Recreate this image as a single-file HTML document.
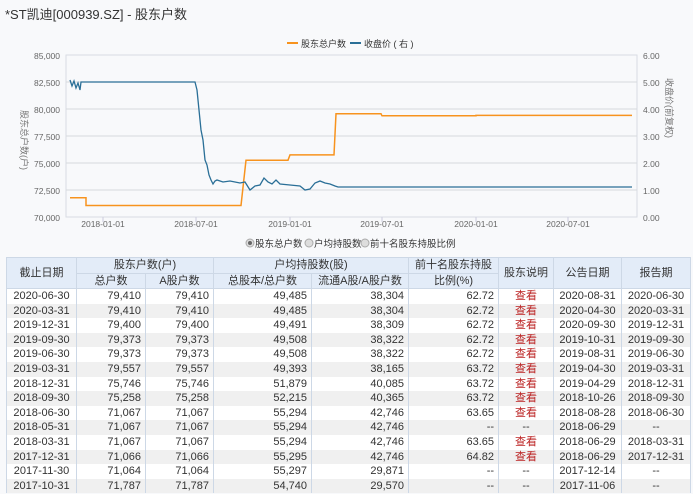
<!DOCTYPE html>
<html><head><meta charset="utf-8"><style>
body{margin:0;width:693px;height:494px;overflow:hidden;background:#f8f9fb;font-family:"Liberation Sans","Noto Sans CJK SC",sans-serif;position:relative}
.title{position:absolute;left:5px;top:4px;font-size:13px;color:#333}
svg{position:absolute;left:0;top:0}
table{position:absolute;left:6px;top:257px;width:684px;border-collapse:collapse;table-layout:fixed;font-size:11px;color:#333}
td,th{border:1px solid #cdd8e6;padding:0 4px;white-space:nowrap;overflow:hidden}
th{background:#e3ecf8;font-weight:normal;height:14.5px;line-height:14.5px;text-align:center}
td{height:14.6px;line-height:14.6px;text-align:right;border-top:none;border-bottom:none}
tbody tr:nth-child(even) td{background:#f0f0f0}
tbody tr:nth-child(odd) td{background:#fff}
td.c{text-align:center}
.r{color:#b22;}
</style></head><body>
<div class="title">*ST凯迪[000939.SZ] - 股东户数</div>
<svg width="693" height="255" font-family="Liberation Sans,Noto Sans CJK SC,sans-serif">
<rect x="66" y="55" width="571" height="162" fill="#f8f9fb" stroke="#d8dce3"/>
<g stroke="#d6d9de" stroke-width="1">
<line x1="66" x2="637" y1="82" y2="82"/><line x1="66" x2="637" y1="109" y2="109"/><line x1="66" x2="637" y1="136" y2="136"/><line x1="66" x2="637" y1="163" y2="163"/><line x1="66" x2="637" y1="190" y2="190"/>
</g>
<g stroke="#ccd" ><line x1="103" x2="103" y1="217" y2="222"/><line x1="196" x2="196" y1="217" y2="222"/><line x1="290" x2="290" y1="217" y2="222"/><line x1="382" x2="382" y1="217" y2="222"/><line x1="476" x2="476" y1="217" y2="222"/><line x1="568" x2="568" y1="217" y2="222"/></g>
<g font-size="8.5" fill="#666" text-anchor="end">
<text x="60" y="59">85,000</text><text x="60" y="86">82,500</text><text x="60" y="113">80,000</text><text x="60" y="140">77,500</text><text x="60" y="167">75,000</text><text x="60" y="194">72,500</text><text x="60" y="221">70,000</text>
</g>
<g font-size="8.5" fill="#666">
<text x="643" y="59">6.00</text><text x="643" y="86">5.00</text><text x="643" y="113">4.00</text><text x="643" y="140">3.00</text><text x="643" y="167">2.00</text><text x="643" y="194">1.00</text><text x="643" y="221">0.00</text>
</g>
<g font-size="8.5" fill="#666" text-anchor="middle">
<text x="103" y="227">2018-01-01</text><text x="196" y="227">2018-07-01</text><text x="290" y="227">2019-01-01</text><text x="382" y="227">2019-07-01</text><text x="476" y="227">2020-01-01</text><text x="568" y="227">2020-07-01</text>
</g>
<text font-size="9" fill="#777" transform="translate(21,110) rotate(90)">股东总户数(户)</text>
<text font-size="9" fill="#777" transform="translate(666,78) rotate(90)">收盘价(前复权)</text>
<line x1="287" x2="298" y1="43" y2="43" stroke="#f7931e" stroke-width="2"/>
<text x="301" y="47" font-size="9" fill="#333">股东总户数</text>
<line x1="350" x2="361" y1="43" y2="43" stroke="#2a6f97" stroke-width="2"/>
<text x="364" y="47" font-size="9" fill="#333">收盘价 ( 右 )</text>
<polyline fill="none" stroke="#f7931e" stroke-width="1.5" points="70,197.7 86,197.7 86,205.5 241,205.5 246,160.2 288,160.2 290,154.9 334,154.9 336,113.8 381,113.8 382,115.8 476,115.8 476,115.4 632,115.4"/>
<polyline fill="none" stroke="#2a6f97" stroke-width="1.3" points="70,80 72,86 74,81 76,88 78,83 80,90 81,82 195,82 197,90 199,110 201,130 203,140 205,160 207,165 209,175 211,180 213,184 215,181 217,180 223,182 230,181 240,183 245,182 250,190 255,186 260,185 264,178 268,182 272,184 276,180 280,184 290,185 300,186 305,190 310,189 315,183 320,181 325,183 330,184 335,186 338,187 632,187"/>
<circle cx="250" cy="243" r="4" fill="#ddd" stroke="#aaa"/><circle cx="250" cy="243" r="2" fill="#666"/>
<text x="255" y="247" font-size="9.5" fill="#333">股东总户数</text>
<circle cx="309" cy="243" r="4" fill="#ddd" stroke="#aaa"/>
<text x="314" y="247" font-size="9.5" fill="#333">户均持股数</text>
<circle cx="365" cy="243" r="4" fill="#ddd" stroke="#aaa"/>
<text x="370" y="247" font-size="9.5" fill="#333">前十名股东持股比例</text>
</svg>
<table>
<colgroup><col style="width:70px"><col style="width:69px"><col style="width:68px"><col style="width:98px"><col style="width:97px"><col style="width:90px"><col style="width:55px"><col style="width:68px"><col style="width:69px"></colgroup>
<thead>
<tr><th rowspan="2">截止日期</th><th colspan="2">股东户数(户)</th><th colspan="2">户均持股数(股)</th><th>前十名股东持股</th><th rowspan="2">股东说明</th><th rowspan="2">公告日期</th><th rowspan="2">报告期</th></tr>
<tr><th>总户数</th><th>A股户数</th><th>总股本/总户数</th><th>流通A股/A股户数</th><th>比例(%)</th></tr>
</thead>
<tbody>
<tr><td class="c">2020-06-30</td><td>79,410</td><td>79,410</td><td>49,485</td><td>38,304</td><td>62.72</td><td class="c r">查看</td><td class="c">2020-08-31</td><td class="c">2020-06-30</td></tr>
<tr><td class="c">2020-03-31</td><td>79,410</td><td>79,410</td><td>49,485</td><td>38,304</td><td>62.72</td><td class="c r">查看</td><td class="c">2020-04-30</td><td class="c">2020-03-31</td></tr>
<tr><td class="c">2019-12-31</td><td>79,400</td><td>79,400</td><td>49,491</td><td>38,309</td><td>62.72</td><td class="c r">查看</td><td class="c">2020-09-30</td><td class="c">2019-12-31</td></tr>
<tr><td class="c">2019-09-30</td><td>79,373</td><td>79,373</td><td>49,508</td><td>38,322</td><td>62.72</td><td class="c r">查看</td><td class="c">2019-10-31</td><td class="c">2019-09-30</td></tr>
<tr><td class="c">2019-06-30</td><td>79,373</td><td>79,373</td><td>49,508</td><td>38,322</td><td>62.72</td><td class="c r">查看</td><td class="c">2019-08-31</td><td class="c">2019-06-30</td></tr>
<tr><td class="c">2019-03-31</td><td>79,557</td><td>79,557</td><td>49,393</td><td>38,165</td><td>63.72</td><td class="c r">查看</td><td class="c">2019-04-30</td><td class="c">2019-03-31</td></tr>
<tr><td class="c">2018-12-31</td><td>75,746</td><td>75,746</td><td>51,879</td><td>40,085</td><td>63.72</td><td class="c r">查看</td><td class="c">2019-04-29</td><td class="c">2018-12-31</td></tr>
<tr><td class="c">2018-09-30</td><td>75,258</td><td>75,258</td><td>52,215</td><td>40,365</td><td>63.72</td><td class="c r">查看</td><td class="c">2018-10-26</td><td class="c">2018-09-30</td></tr>
<tr><td class="c">2018-06-30</td><td>71,067</td><td>71,067</td><td>55,294</td><td>42,746</td><td>63.65</td><td class="c r">查看</td><td class="c">2018-08-28</td><td class="c">2018-06-30</td></tr>
<tr><td class="c">2018-05-31</td><td>71,067</td><td>71,067</td><td>55,294</td><td>42,746</td><td>--</td><td class="c">--</td><td class="c">2018-06-29</td><td class="c">--</td></tr>
<tr><td class="c">2018-03-31</td><td>71,067</td><td>71,067</td><td>55,294</td><td>42,746</td><td>63.65</td><td class="c r">查看</td><td class="c">2018-06-29</td><td class="c">2018-03-31</td></tr>
<tr><td class="c">2017-12-31</td><td>71,066</td><td>71,066</td><td>55,295</td><td>42,746</td><td>64.82</td><td class="c r">查看</td><td class="c">2018-06-29</td><td class="c">2017-12-31</td></tr>
<tr><td class="c">2017-11-30</td><td>71,064</td><td>71,064</td><td>55,297</td><td>29,871</td><td>--</td><td class="c">--</td><td class="c">2017-12-14</td><td class="c">--</td></tr>
<tr><td class="c">2017-10-31</td><td>71,787</td><td>71,787</td><td>54,740</td><td>29,570</td><td>--</td><td class="c">--</td><td class="c">2017-11-06</td><td class="c">--</td></tr>
</tbody></table>
</body></html>
